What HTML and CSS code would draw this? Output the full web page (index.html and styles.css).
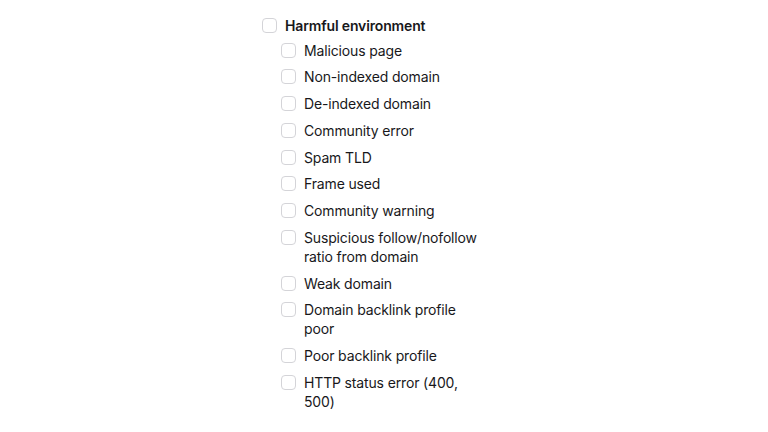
FILE: index.html
```html
<!DOCTYPE html>
<html>
	<head>
		<meta charset="utf-8">
		<title>Filters</title>
		<link rel="stylesheet" href="styles.css">
	</head>
	<body>
		<section class="group">
			<label class="row parent">
				<span class="box"></span>
				<span class="text">Harmful environment</span>
			</label>
			<div class="children">
				<label class="row"><span class="box"></span><span class="text">Malicious page</span></label>
				<label class="row"><span class="box"></span><span class="text">Non-indexed domain</span></label>
				<label class="row"><span class="box"></span><span class="text">De-indexed domain</span></label>
				<label class="row"><span class="box"></span><span class="text">Community error</span></label>
				<label class="row"><span class="box"></span><span class="text">Spam TLD</span></label>
				<label class="row"><span class="box"></span><span class="text">Frame used</span></label>
				<label class="row"><span class="box"></span><span class="text">Community warning</span></label>
				<label class="row"><span class="box"></span><span class="text">Suspicious follow/nofollow ratio from domain</span></label>
				<label class="row"><span class="box"></span><span class="text">Weak domain</span></label>
				<label class="row"><span class="box"></span><span class="text">Domain backlink profile poor</span></label>
				<label class="row"><span class="box"></span><span class="text">Poor backlink profile</span></label>
				<label class="row"><span class="box"></span><span class="text">HTTP status error (400, 500)</span></label>
			</div>
		</section>
	</body>
</html>
```
FILE: styles.css
```css
html {
	height: 100%;
}
body {
	background: #fff;
	color: #18181b;
	font-family: Inter, "Noto Sans", sans-serif;
	font-size: 14px;
	letter-spacing: -0.15px;
	line-height: 19.2px;
	margin: 0;
	padding: 15.5px 0 0 262px;
}
.group {
	display: flex;
	flex-direction: column;
	width: 220px;
}
.row {
	align-items: flex-start;
	display: flex;
	gap: 8px;
}
.parent .text {
	font-weight: 600;
}
.children {
	display: flex;
	flex-direction: column;
	gap: 7.5px;
	margin-top: 6px;
	padding-left: 19px;
}
.children .text {
	max-width: 176px;
}
.box {
	background: #fff;
	border: 1px solid #d4d4d8;
	border-radius: 4px;
	box-sizing: border-box;
	flex-shrink: 0;
	height: 15px;
	margin-top: 2px;
	width: 15px;
}
```
